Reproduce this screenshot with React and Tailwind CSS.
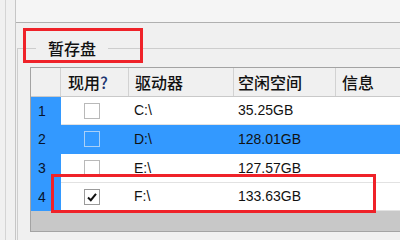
import React from "react";

const rows = [
    { n: "1", drive: "C:\\", free: "35.25GB", checked: false, selected: false, h: "h-[28px]" },
    { n: "2", drive: "D:\\", free: "128.01GB", checked: false, selected: true, h: "h-[29px]" },
    { n: "3", drive: "E:\\", free: "127.57GB", checked: false, selected: false, h: "h-[29px]" },
    { n: "4", drive: "F:\\", free: "133.63GB", checked: true, selected: false, h: "h-[28px]" },
];

function CheckBox({ checked, selected }) {
    return (
        <div
            className={
                selected
                    ? "w-[16px] h-[16px] border border-[#a9d0f7] bg-[#3399ff]"
                    : checked
                    ? "w-[16px] h-[16px] border border-[#9a9a9a] bg-white flex items-center justify-center"
                    : "w-[16px] h-[16px] border border-[#b9b9b9] bg-white"
            }
        >
            {checked && (
                <svg width="12" height="12" viewBox="0 0 12 12">
                    <path d="M2 6.5 L4.8 9.2 L10 2.8" fill="none" stroke="#111" strokeWidth="2" />
                </svg>
            )}
        </div>
    );
}

export default function App() {
    return (
        <div className="relative w-[400px] h-[240px] overflow-hidden bg-[#f0f0f0] font-['Liberation_Sans','Noto_Sans_CJK_SC',sans-serif] text-[#111]">
            <div className="ml-[5px] h-full border-l border-[#d4d4d4] pl-[9px]">
                <div className="h-full border-l border-[#c6c6c6]">
                    <div className="h-[23px] border-b border-[#b0b0b0] bg-[#f5f5f5]" />
                    <div className="ml-[1px] mt-[25px] h-[300px] border-l border-t border-[#cdcdcd]">
                        <div className="-mt-[10px] ml-[18px] w-fit bg-[#f0f0f0] px-[12px] text-[16px] leading-[18px] font-medium font-['Noto_Sans_CJK_SC',sans-serif]">
                            暂存盘
                        </div>

                        <div className="ml-[12px] mt-[10px] w-[400px] border border-[#a3a3a3] bg-white">
                            <div className="flex h-[29px] border-b border-[#c9c9c9] bg-[#f0f0f0] text-[16px] font-medium font-['Noto_Sans_CJK_SC',sans-serif]">
                                <div className="w-[30px] border-r border-[#d2d2d2]" />
                                <div className="w-[68px] border-r border-[#d2d2d2] pl-[7px] flex items-center">
                                    现用<span className="text-[#1d3570]">?</span>
                                </div>
                                <div className="w-[105px] border-r border-[#d2d2d2] pl-[6px] flex items-center">驱动器</div>
                                <div className="w-[102px] border-r border-[#d2d2d2] pl-[4px] flex items-center">空闲空间</div>
                                <div className="flex-1 pl-[6px] flex items-center">信息</div>
                            </div>

                            {rows.map((r) => (
                                <div key={r.n} className={`flex ${r.h} text-[14px]`}>
                                    <div className="w-[30px] bg-[#3399ff] pl-[7px] flex items-center text-[#08142b]">{r.n}</div>
                                    <div
                                        className={`flex flex-1 border-b ${
                                            r.selected ? "bg-[#3399ff] border-[#3399ff]" : "bg-white border-[#e2e2e2]"
                                        }`}
                                    >
                                        <div className="w-[68px] pl-[23px] flex items-center">
                                            <CheckBox checked={r.checked} selected={r.selected} />
                                        </div>
                                        <div className="w-[105px] pl-[5px] flex items-center">{r.drive}</div>
                                        <div className="w-[102px] pl-[4px] flex items-center">{r.free}</div>
                                        <div className="flex-1" />
                                    </div>
                                </div>
                            ))}

                            <div className="h-[20px] bg-[#c8c8c8]" />
                        </div>
                    </div>
                </div>
            </div>

            <div className="absolute left-[23px] top-[28px] w-[120px] h-[35px] border-[3px] border-[#ef2229]" />
            <div className="absolute left-[51px] top-[174px] w-[325px] h-[39px] border-[3px] border-[#ef2229]" />
        </div>
    );
}
